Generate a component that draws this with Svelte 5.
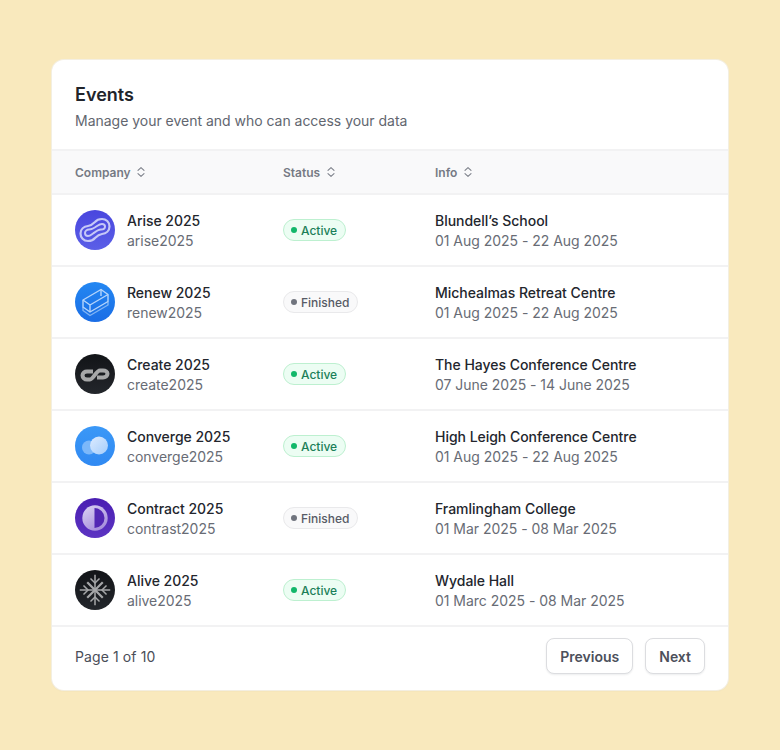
<script>
  const rows = [
    { name: 'Arise 2025', id: 'arise2025', status: 'Active', place: 'Blundell’s School', dates: '01 Aug 2025 - 22 Aug 2025', logo: 'arise' },
    { name: 'Renew 2025', id: 'renew2025', status: 'Finished', place: 'Michealmas Retreat Centre', dates: '01 Aug 2025 - 22 Aug 2025', logo: 'renew' },
    { name: 'Create 2025', id: 'create2025', status: 'Active', place: 'The Hayes Conference Centre', dates: '07 June 2025 - 14 June 2025', logo: 'create' },
    { name: 'Converge 2025', id: 'converge2025', status: 'Active', place: 'High Leigh Conference Centre', dates: '01 Aug 2025 - 22 Aug 2025', logo: 'converge' },
    { name: 'Contract 2025', id: 'contrast2025', status: 'Finished', place: 'Framlingham College', dates: '01 Mar 2025 - 08 Mar 2025', logo: 'contrast' },
    { name: 'Alive 2025', id: 'alive2025', status: 'Active', place: 'Wydale Hall', dates: '01 Marc 2025 - 08 Mar 2025', logo: 'alive' }
  ];
  const heads = ['Company', 'Status', 'Info'];
</script>

<main class="page">
  <section class="card">
    <header class="top">
      <h1>Events</h1>
      <p>Manage your event and who can access your data</p>
    </header>

    <div class="grid head">
      {#each heads as h}
        <div class="th">
          <span>{h}</span>
          <svg width="10" height="12" viewBox="0 0 10 12" fill="none" stroke="#7d808a" stroke-width="1.100" stroke-linecap="round" stroke-linejoin="round">
            <path d="M2 4.400 5 1.600l3 2.800M2 7.600l3 2.800 3-2.800" />
          </svg>
        </div>
      {/each}
    </div>

    {#each rows as r}
      <div class="grid row">
        <div class="company">
          <svg class="logo" width="40" height="40" viewBox="0 0 40 40">
            <defs>
              <linearGradient id="g-{r.logo}" x1="0" y1="0" x2="0" y2="1">
                {#if r.logo === 'arise'}
                  <stop offset="0" stop-color="#4946de" /><stop offset="1" stop-color="#5b5fe7" />
                {:else if r.logo === 'renew'}
                  <stop offset="0" stop-color="#2387f2" /><stop offset="1" stop-color="#1a6de5" />
                {:else if r.logo === 'converge'}
                  <stop offset="0" stop-color="#3a98f7" /><stop offset="1" stop-color="#3089f2" />
                {:else if r.logo === 'contrast'}
                  <stop offset="0" stop-color="#4a1eb2" /><stop offset="1" stop-color="#5c34c2" />
                {:else}
                  <stop offset="0" stop-color="#121417" /><stop offset="1" stop-color="#23262b" />
                {/if}
              </linearGradient>
            </defs>
            <circle cx="20" cy="20" r="20" fill="url(#g-{r.logo})" />
            {#if r.logo === 'arise'}
              <g fill="none" stroke="#c6c8f7">
                <path stroke-width="2.200" d="M13 31C8.500 31 5.500 27.500 5.500 23.500 5.500 19 9 16.500 13 16 16 15.600 18 14 20 12 21.500 10 24 9 27 9 31 9 34.500 12 34.500 16.500 34.500 21 31 23.500 27 24 24 24.400 22 26 20 28 18.500 30 16 31 13 31Z" />
                <path stroke-width="2" d="M14 19.500C17 19.500 20 17.500 22 16 23.500 15 25 14 27 14 29 14 30 15.200 30 16.500 30 18 28.500 19.500 26 19.500 23 19.500 20 22 18 23.500 16.500 24.500 15 26 13 26 11 26 10 24.500 10 23 10 21 12 19.500 14 19.500Z" />
              </g>
            {:else if r.logo === 'renew'}
              <g fill="none" stroke="#b5d5fb" stroke-width="1.400" stroke-linejoin="round">
                <path d="M8 18 26 7.500l7 5v7L15 30l-7-5v-7Z" />
                <path d="M8 18l7 5 18-10.500M15 23v7M26 7.500v6.500" />
                <path d="M8 25v3.500l7 5 18-10.500v-3.500" opacity=".65" />
              </g>
            {:else if r.logo === 'create'}
              <path fill="none" stroke="#a6a7a8" stroke-width="4" d="M18 17.500H12C9.500 17.500 7.500 19 7.500 21.200 7.500 23.500 9.500 25.500 12 25.500H15C18.500 25.500 21 16.500 25 16.500H28C30.500 16.500 32.500 17.800 32.500 19.800 32.500 22 30.500 23.500 28 23.500H22" />
            {:else if r.logo === 'converge'}
              <defs>
                <linearGradient id="cv" x1="0" y1="0" x2="1" y2="1">
                  <stop offset="0" stop-color="#dcebff" />
                  <stop offset="1" stop-color="#a5cdfb" />
                </linearGradient>
              </defs>
              <circle cx="14" cy="21.500" r="7" fill="#7cb8fa" />
              <circle cx="24" cy="19.500" r="9" fill="url(#cv)" />
            {:else if r.logo === 'contrast'}
              <defs>
                <linearGradient id="ct" x1="0" y1="0" x2="0.600" y2="1">
                  <stop offset="0" stop-color="#dcd4f3" />
                  <stop offset="1" stop-color="#a78fdc" />
                </linearGradient>
              </defs>
              <circle cx="20" cy="20" r="12.700" fill="url(#ct)" />
              <path d="M19.500 10a10 10 0 0 1 0 20Z" fill="#5227b4" />
            {:else}
              <g fill="none" stroke="#a6a7a9" stroke-linecap="square">
                <path stroke-width="1.500" d="M5.500 20h29M20 5.500v29" />
                <path stroke-width="2.200" d="M13 13l14 14M27 13 13 27" />
                <path stroke-width="1.500" d="M16 9l4 4 4-4M16 31l4-4 4 4M9 16l4 4-4 4M31 16l-4 4 4 4" />
              </g>
            {/if}
          </svg>
          <div class="stack">
            <div class="main">{r.name}</div>
            <div class="sub">{r.id}</div>
          </div>
        </div>
        <div class="cell">
          <span class="badge" class:on={r.status === 'Active'}>
            <i></i>{r.status}
          </span>
        </div>
        <div class="stack">
          <div class="main">{r.place}</div>
          <div class="sub">{r.dates}</div>
        </div>
      </div>
    {/each}

    <footer class="foot">
      <span class="pg">Page 1 of 10</span>
      <div class="btns">
        <button>Previous</button>
        <button>Next</button>
      </div>
    </footer>
  </section>
</main>

<style>
  :global(body) {
    margin: 0;
    background: #f9e9bd;
    font-family: Inter, "Liberation Sans", sans-serif;
  }
  .page {
    height: 750px;
    box-sizing: border-box;
    padding: 60px 52px;
  }
  .card {
    background: #fff;
    border-radius: 12px;
    height: 630px;
    overflow: hidden;
    box-shadow: 0 0 0 1px rgba(243, 240, 230, 0.9), 0 1px 2px rgba(16, 24, 40, 0.05);
  }
  .top {
    height: 89px;
    box-sizing: border-box;
    padding: 24px 23px 0;
  }
  h1 {
    margin: 0;
    font-size: 18px;
    line-height: 22px;
    font-weight: 600;
    color: #21242b;
  }
  .top p {
    margin: 5px 0 0;
    font-size: 14px;
    line-height: 20px;
    color: #62666f;
    letter-spacing: -0.02px;
  }
  .grid {
    display: grid;
    grid-template-columns: 208px 152px 1fr;
    align-items: center;
    padding: 0 23px;
    border-top: 2px solid #f2f2f3;
    box-sizing: border-box;
  }
  .head {
    height: 44px;
    background: #f9f9fa;
  }
  .th {
    display: flex;
    align-items: center;
    gap: 5.500px;
    font-size: 12px;
    font-weight: 600;
    color: #767a84;
  }
  .row {
    height: 72px;
  }
  .company {
    display: flex;
    align-items: center;
    gap: 12px;
  }
  .logo {
    flex: none;
    display: block;
  }
  .stack {
    padding-top: 2px;
  }
  .cell {
    display: flex;
  }
  .main {
    font-size: 14px;
    line-height: 20px;
    font-weight: 500;
    color: #23262d;
    letter-spacing: -0.03px;
  }
  .sub {
    font-size: 14px;
    line-height: 20px;
    color: #686c75;
    letter-spacing: -0.03px;
  }
  .badge {
    display: inline-flex;
    align-items: center;
    gap: 4px;
    box-sizing: border-box;
    height: 22px;
    padding: 0 7px;
    border-radius: 11px;
    font-size: 12px;
    font-weight: 500;
    color: #575b65;
    background: #f9f9fa;
    border: 1px solid #e9e9eb;
  }
  .badge i {
    width: 6px;
    height: 6px;
    border-radius: 50%;
    background: #70747e;
  }
  .badge.on {
    color: #1b8059;
    background: #ecfdf3;
    border-color: #bdf0d0;
    padding-right: 8px;
  }
  .badge.on i {
    background: #12b76a;
  }
  .foot {
    height: 64px;
    box-sizing: border-box;
    border-top: 2px solid #f2f2f3;
    padding: 0 23px 4px;
    display: flex;
    align-items: center;
    justify-content: space-between;
    font-size: 14px;
    color: #4a4e58;
  }
  .pg {
    letter-spacing: 0.1px;
  }
  .btns {
    display: flex;
    gap: 12px;
  }
  button {
    height: 36px;
    padding: 0 13px;
    font: 600 14px Inter, "Liberation Sans", sans-serif;
    color: #4c505b;
    background: #fff;
    border: 1px solid #dcdde0;
    border-radius: 8px;
    box-shadow: 0 1px 2px rgba(16, 24, 40, 0.08);
  }
</style>
